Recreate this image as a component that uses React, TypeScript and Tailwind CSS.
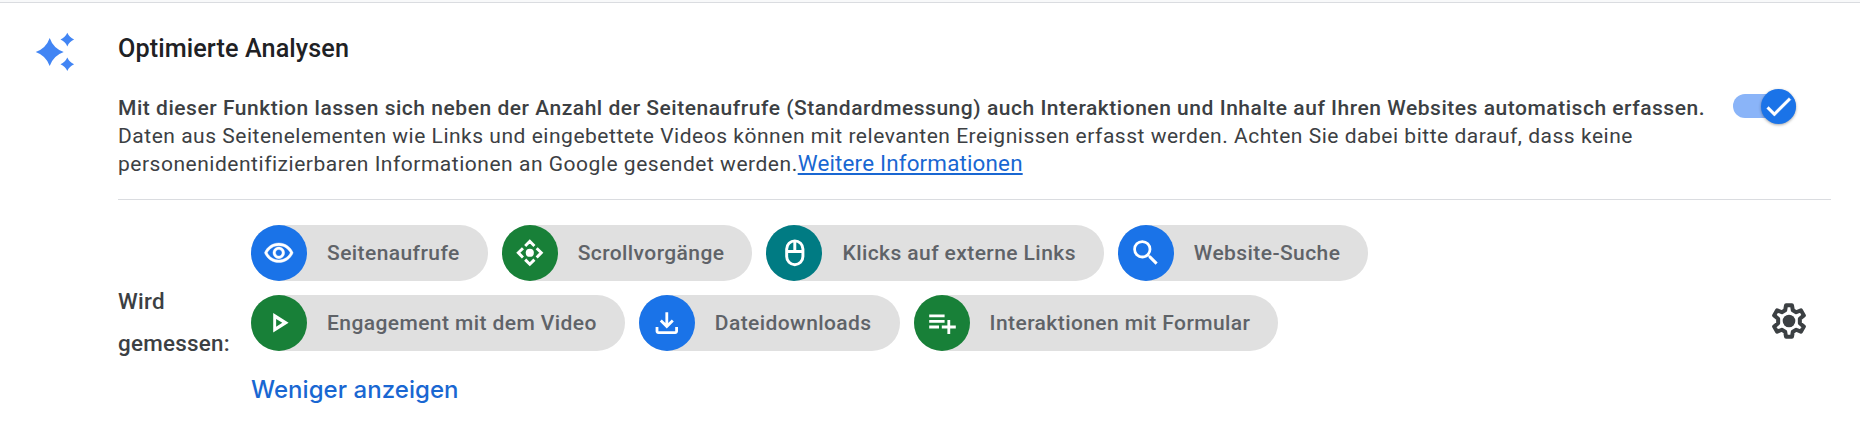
import React from "react";

const icons = {
  eye: (
    <path
      transform="translate(12 12) scale(.93) translate(-12 -12)"
      stroke="currentColor"
      strokeWidth=".3"
      d="M12 6.5c3.79 0 7.17 2.13 8.82 5.5-1.65 3.37-5.02 5.5-8.82 5.5S4.83 15.37 3.18 12C4.83 8.63 8.21 6.5 12 6.5m0-2C7 4.5 2.73 7.61 1 12c1.73 4.39 6 7.5 11 7.5s9.27-3.11 11-7.5c-1.73-4.39-6-7.5-11-7.5zm0 5c1.38 0 2.5 1.12 2.5 2.5s-1.12 2.5-2.5 2.5S9.5 13.38 9.5 12s1.12-2.5 2.5-2.5m0-2c-2.48 0-4.5 2.02-4.5 4.5s2.02 4.5 4.5 4.5 4.5-2.02 4.5-4.5-2.02-4.5-4.5-4.5z"
    />
  ),
  scroll: (
    <g>
      <circle cx="12" cy="12" r="2.9" />
      <g fill="none" stroke="currentColor" strokeWidth="2.1">
        <path d="M8.7 7.1 12 3.8l3.3 3.3M8.7 16.9 12 20.2l3.3-3.3M7.1 8.7 3.8 12l3.3 3.3M16.9 8.7 20.2 12l-3.3 3.3" />
      </g>
    </g>
  ),
  mouse: (
    <g fill="none" stroke="currentColor" strokeWidth="2.1">
      <rect x="6.2" y="3.5" width="11.6" height="17" rx="5.8" />
      <path d="M6.2 11.1h11.6M12 3.5v7.6" />
    </g>
  ),
  search: (
    <path d="M15.5 14h-.79l-.28-.27A6.471 6.471 0 0 0 16 9.5 6.5 6.5 0 1 0 9.5 16c1.61 0 3.09-.59 4.23-1.57l.27.28v.79l5 4.99L20.49 19l-4.99-5zm-6 0C7.01 14 5 11.99 5 9.5S7.01 5 9.5 5 14 7.01 14 9.5 11.99 14 9.5 14z" />
  ),
  play: <path d="M10.1 9.2 14.5 12l-4.4 2.8V9.2M8 5v14l11-7L8 5z" />,
  download: (
    <path d="M18 15v3H6v-3H4v3c0 1.1.9 2 2 2h12c1.1 0 2-.9 2-2v-3h-2zm-1-4-1.41-1.41L13 12.17V4.5h-2v7.67L8.41 9.59 7 11l5 5 5-5z" />
  ),
  form: (
    <path d="M14 10H3v2h11v-2zm0-4H3v2h11V6zm4 8v-4h-2v4h-4v2h4v4h2v-4h4v-2h-4zM3 16h7v-2H3v2z" />
  ),
};

type Item = { icon: keyof typeof icons; label: string; color: string };

const rows: Item[][] = [
  [
    { icon: "eye", label: "Seitenaufrufe", color: "bg-[#1a73e8]" },
    { icon: "scroll", label: "Scrollvorgänge", color: "bg-[#188038]" },
    { icon: "mouse", label: "Klicks auf externe Links", color: "bg-[#007b83]" },
    { icon: "search", label: "Website-Suche", color: "bg-[#1a73e8]" },
  ],
  [
    { icon: "play", label: "Engagement mit dem Video", color: "bg-[#188038]" },
    { icon: "download", label: "Dateidownloads", color: "bg-[#1a73e8]" },
    { icon: "form", label: "Interaktionen mit Formular", color: "bg-[#188038]" },
  ],
];

function Chip({ icon, label, color }: Item) {
  return (
    <div className="flex h-14 items-center rounded-full bg-[#e0e0e0] pr-7">
      <div className={`flex size-14 items-center justify-center rounded-full text-white ${color}`}>
        <svg viewBox="0 0 24 24" className="size-[33.6px]" fill="currentColor">
          {icons[icon]}
        </svg>
      </div>
      <span className="ml-5 text-[21px] leading-7 font-medium tracking-[0.42px] whitespace-nowrap text-[#5f6368]">
        {label}
      </span>
    </div>
  );
}

function Sparkles() {
  return (
    <svg viewBox="0 0 40 40" className="size-10" fill="#4285f4">
      <path d="M14.7 6q3.6 10.4 14 14-10.4 3.6-14 14-3.6-10.4-14-14 10.4-3.6 14-14z" />
      <path d="M32.3 .8q2.1 4.7 6.8 6.8-4.7 2.1-6.8 6.8-2.1-4.7-6.8-6.8 4.7-2.1 6.8-6.8z" />
      <path d="M32.3 25.4q2.1 4.7 6.8 6.8-4.7 2.1-6.8 6.8-2.1-4.7-6.8-6.8 4.7-2.1 6.8-6.8z" />
    </svg>
  );
}

function Gear() {
  return (
    <svg viewBox="0 0 24 24" className="size-[42px]" fill="none" stroke="#3c4043" strokeWidth="2.3">
      <path
        d="M10.3 3h3.4l.5 2.9 1.9 1.1 2.7-1.1 1.7 2.9-2.3 1.9v2.6l2.3 1.9-1.7 2.9-2.7-1.1-1.9 1.1-.5 2.900h-3.4l-.5-2.900-1.9-1.1-2.7 1.1-1.7-2.9 2.3-1.9v-2.6L3.5 8.800l1.7-2.900L7.9 7l1.9-1.1z"
        strokeLinejoin="round"
      />
      <circle cx="12" cy="12" r="3.6" fill="#3c4043" stroke="none" />
    </svg>
  );
}

export default function App() {
  return (
    <div className="flex h-[440px] w-[1860px] flex-col bg-white font-['Roboto',sans-serif] text-[#3c4043]">
      <div className="h-[3px] shrink-0 border-b border-[#dadce0] bg-[#f8f9fa]" />
      <div className="flex flex-1">
        <div className="w-[118px] shrink-0 pt-[29px] pl-[35px]">
          <Sparkles />
        </div>
        <div className="flex w-[1713px] flex-col">
          <h2 className="mt-[29px] text-[25.2px] leading-[34px] font-medium tracking-[0.1px] text-[#202124]">
            Optimierte Analysen
          </h2>
          <div className="mt-[28px] flex h-[106px] border-b border-[#dadce0]">
            <p className="w-[1615px] shrink-0 text-[21px] leading-7 tracking-[0.52px] whitespace-nowrap">
              <strong className="font-medium tracking-[0.53px]">
                Mit dieser Funktion lassen sich neben der Anzahl der Seitenaufrufe (Standardmessung) auch Interaktionen und
                Inhalte auf Ihren Websites automatisch erfassen.
              </strong>
              <br />
              <span>
                Daten aus Seitenelementen wie Links und eingebettete Videos können mit relevanten Ereignissen erfasst werden.
                Achten Sie dabei bitte darauf, dass keine
              </span>
              <br />
              <span>personenidentifizierbaren Informationen an Google gesendet werden.</span>
              <a href="#" className="text-[22.4px] leading-none tracking-[0.17px] text-[#1967d2] underline">
                Weitere Informationen
              </a>
            </p>
            <button
              type="button"
              role="switch"
              aria-checked="true"
              className="flex h-6 w-[63px] items-center justify-end rounded-full bg-[#8ab4f8]"
            >
              <span className="flex size-[35px] items-center justify-center rounded-full bg-[#1a73e8] shadow-[0_1px_3px_rgba(0,0,0,0.35)]">
                <svg viewBox="0 0 24 24" className="size-[33px] shrink-0" fill="white" stroke="white" strokeWidth=".3">
                  <path d="M9 16.17 4.83 12l-1.42 1.41L9 19 21 7l-1.41-1.41z" />
                </svg>
              </span>
            </button>
          </div>
          <div className="flex items-center pt-[25px]">
            <div className="w-[133px] pt-0.5 text-[22.4px] leading-[42px] font-medium tracking-[0.25px]">
              Wird
              <br />
              gemessen:
            </div>
            <div className="flex flex-1 flex-col gap-3.5">
              {rows.map((row, i) => (
                <div key={i} className="flex gap-3.5">
                  {row.map((item) => (
                    <Chip key={item.label} {...item} />
                  ))}
                </div>
              ))}
              <button
                type="button"
                className="self-start pt-1 pb-1.5 font-['Inter',sans-serif] text-[24px] leading-[42px] font-medium tracking-[0.05px] text-[#1967d2]"
              >
                Weniger anzeigen
              </button>
            </div>
            <button type="button" aria-label="Einstellungen" className="mr-[21px]">
              <Gear />
            </button>
          </div>
        </div>
      </div>
    </div>
  );
}
